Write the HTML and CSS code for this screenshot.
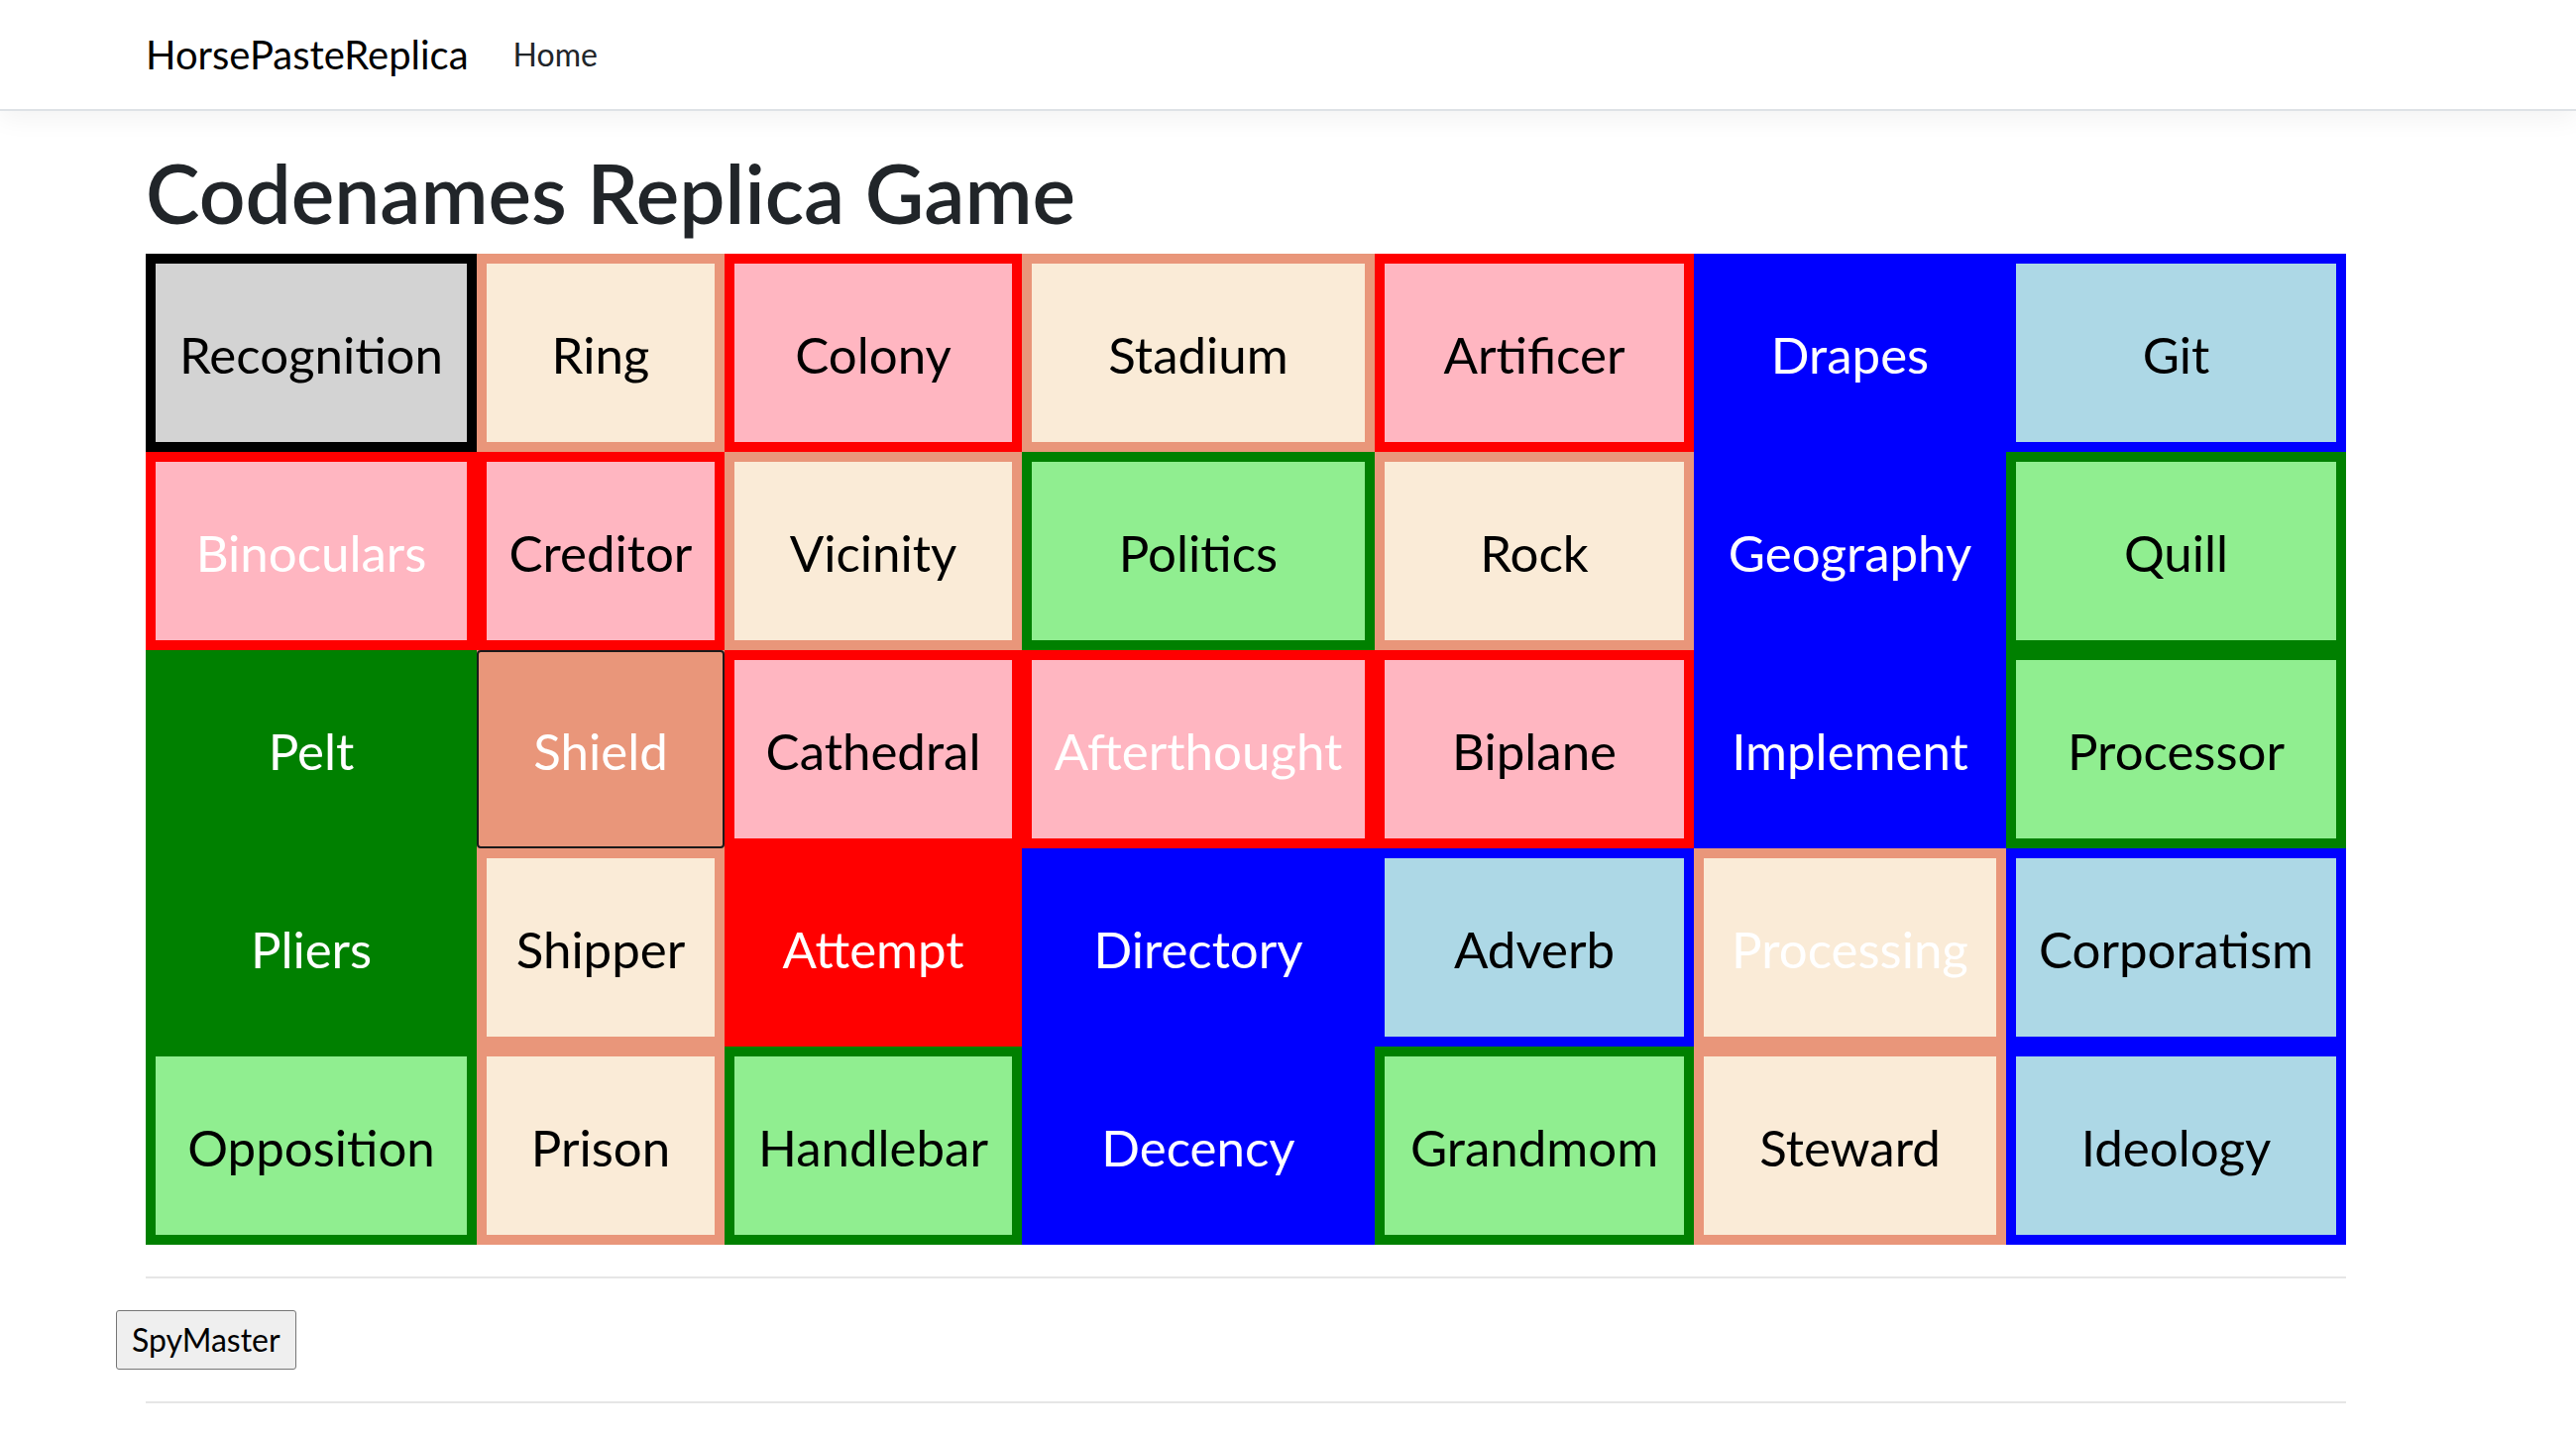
FILE: index.html
```html
<!DOCTYPE html>
<html lang="en">
<head>
<meta charset="utf-8">
<title>Codenames Replica Game - HorsePasteReplica</title>
<link rel="stylesheet" href="styles.css">
</head>
<body>
<header class="topbar">
  <nav class="navbar">
    <div class="container nav-inner">
      <a class="brand" href="#">HorsePasteReplica</a>
      <ul class="nav-list">
        <li><a class="nav-link" href="#">Home</a></li>
      </ul>
    </div>
  </nav>
</header>
<main class="container main">
  <h1 class="title">Codenames Replica Game</h1>
  <div class="board">
    <div class="card hid-a">Recognition</div>
    <div class="card hid-n">Ring</div>
    <div class="card hid-r">Colony</div>
    <div class="card hid-n">Stadium</div>
    <div class="card hid-r">Artificer</div>
    <div class="card rev-b">Drapes</div>
    <div class="card hid-b">Git</div>

    <div class="card hid-r light">Binoculars</div>
    <div class="card hid-r">Creditor</div>
    <div class="card hid-n">Vicinity</div>
    <div class="card hid-g">Politics</div>
    <div class="card hid-n">Rock</div>
    <div class="card rev-b">Geography</div>
    <div class="card hid-g">Quill</div>

    <div class="card rev-g">Pelt</div>
    <div class="card rev-n focused">Shield</div>
    <div class="card hid-r">Cathedral</div>
    <div class="card hid-r light">Afterthought</div>
    <div class="card hid-r">Biplane</div>
    <div class="card rev-b">Implement</div>
    <div class="card hid-g">Processor</div>

    <div class="card rev-g">Pliers</div>
    <div class="card hid-n">Shipper</div>
    <div class="card rev-r">Attempt</div>
    <div class="card rev-b">Directory</div>
    <div class="card hid-b">Adverb</div>
    <div class="card hid-n light">Processing</div>
    <div class="card hid-b">Corporatism</div>

    <div class="card hid-g">Opposition</div>
    <div class="card hid-n">Prison</div>
    <div class="card hid-g">Handlebar</div>
    <div class="card rev-b">Decency</div>
    <div class="card hid-g">Grandmom</div>
    <div class="card hid-n">Steward</div>
    <div class="card hid-b">Ideology</div>
  </div>
  <hr class="rule">
  <div class="row">
    <button class="spy-btn" type="button">SpyMaster</button>
  </div>
  <hr class="rule">
</main>
</body>
</html>
```

FILE: styles.css
```css
html, body {
  margin: 0;
  padding: 0;
  background: #fff;
}

body {
  font-family: "Segoe UI", Lato, "Open Sans", sans-serif;
  font-size: 32px;
  line-height: 1.5;
  color: #212529;
}

.container {
  box-sizing: border-box;
  width: 2220px;
  margin-left: 147px;
}

/* ---------- navbar ---------- */
.topbar {
  margin-bottom: 32px;
}

.navbar {
  background: #fff;
  border-bottom: 2px solid #dee2e6;
  box-shadow: 0 8px 24px rgba(0, 0, 0, 0.05);
  padding: 15px 0;
}

.nav-inner {
  display: flex;
  align-items: center;
}

.brand {
  font-size: 40px;
  line-height: 60px;
  padding: 10px 0;
  margin-right: 29px;
  color: #000;
  text-decoration: none;
  white-space: nowrap;
}

.nav-list {
  list-style: none;
  margin: 0;
  padding: 0;
  display: flex;
}

.nav-link {
  display: block;
  font-size: 32px;
  line-height: 48px;
  padding: 16px 16px;
  color: #212529;
  text-decoration: none;
}

/* ---------- main ---------- */
.title {
  font-size: 82px;
  font-weight: 600;
  line-height: 100px;
  margin: 0 0 12px;
  color: #212529;
}

.board {
  display: grid;
  grid-template-columns: 334px 250px 300px 356px 322px 315px 343px;
  grid-auto-rows: 200px;
}

.card {
  position: relative;
  box-sizing: border-box;
  border: 10px solid transparent;
  padding-top: 3px;
  display: flex;
  align-items: center;
  justify-content: center;
  font-size: 51px;
  line-height: 1.2;
  color: #000;
  white-space: nowrap;
}

/* hidden (spymaster view) */
.hid-a { background: #d3d3d3; border-color: #000; }
.hid-n { background: #faebd7; border-color: #e9967a; }
.hid-r { background: #ffb6c1; border-color: #ff0000; }
.hid-b { background: #add8e6; border-color: #0000ff; }
.hid-g { background: #90ee90; border-color: #008000; }

/* revealed */
.rev-b { background: #0000ff; border-color: #0000ff; color: #fff; }
.rev-g { background: #008000; border-color: #008000; color: #fff; }
.rev-r { background: #ff0000; border-color: #ff0000; color: #fff; }
.rev-n { background: #e9967a; border-color: #e9967a; color: #fff; }

.light { color: #fff; }

.focused::after {
  content: "";
  position: absolute;
  top: -10px;
  left: -10px;
  right: -10px;
  bottom: -10px;
  border: 2px solid #1a1a1a;
  border-radius: 4px;
}

.rule {
  border: 0;
  border-top: 2px solid #e6e6e6;
  height: 0;
  margin: 32px 0;
}

.row {
  display: flex;
  margin-left: -30px;
}

.spy-btn {
  font-family: inherit;
  font-size: 32px;
  line-height: 48px;
  padding: 5px 15px;
  border: 1px solid #767676;
  border-radius: 3px;
  background: #efefef;
  color: #000;
}
```
